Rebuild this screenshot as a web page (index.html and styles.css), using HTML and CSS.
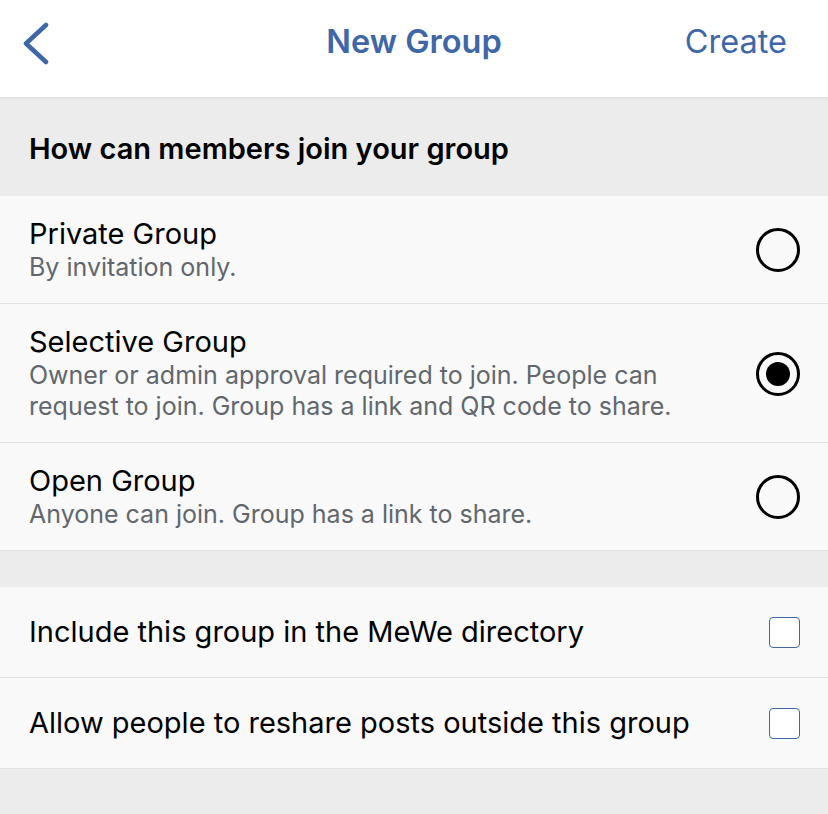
FILE: index.html
```html
<!DOCTYPE html>
<html lang="en">
<head>
    <meta charset="UTF-8">
    <meta name="viewport" content="width=device-width, initial-scale=1.0">
    <title>New Group</title>
    <link rel="stylesheet" href="styles.css">
</head>
<body>
    <header class="topbar">
        <a class="back" href="#">
            <svg width="40" height="44" viewBox="0 0 40 44"><path d="M31 4 L11 22.5 L31 41" fill="none" stroke="#3f67a8" stroke-width="4.5" stroke-linecap="round" stroke-linejoin="round"/></svg>
        </a>
        <h1>New Group</h1>
        <a class="create" href="#">Create</a>
    </header>

    <div class="section-head">How can members join your group</div>

    <ul class="list">
        <li class="row">
            <div class="text">
                <div class="title">Private Group</div>
                <div class="sub">By invitation only.</div>
            </div>
            <span class="radio"></span>
        </li>
        <li class="row">
            <div class="text">
                <div class="title">Selective Group</div>
                <div class="sub">Owner or admin approval required to join. People can request to join. Group has a link and QR code to share.</div>
            </div>
            <span class="radio checked"></span>
        </li>
        <li class="row">
            <div class="text">
                <div class="title">Open Group</div>
                <div class="sub">Anyone can join. Group has a link to share.</div>
            </div>
            <span class="radio"></span>
        </li>
    </ul>

    <div class="gap"></div>

    <ul class="list">
        <li class="row check-row">
            <div class="title">Include this group in the MeWe directory</div>
            <span class="checkbox"></span>
        </li>
        <li class="row check-row">
            <div class="title">Allow people to reshare posts outside this group</div>
            <span class="checkbox"></span>
        </li>
    </ul>
</body>
</html>
```

FILE: styles.css
```css
body { margin: 0; padding: 0; background: #ececec; font-family: Inter, "Noto Sans", Arial, sans-serif; color: #000; }
.topbar { height: 97px; background: #fff; display: grid; grid-template-columns: 1fr auto 1fr; align-items: center; box-shadow: 0 1px 3px rgba(0, 0, 0, 0.08); position: relative; }
.topbar h1 { margin: 0; font-size: 32.5px; font-weight: 600; color: #3f67a8; padding-bottom: 14px; }
.back { display: flex; padding: 0 0 12px 15px; }
.create { justify-self: end; font-size: 32.5px; color: #3f67a8; text-decoration: none; padding: 0 41px 14px 0; }
.section-head { height: 99px; box-sizing: border-box; display: flex; align-items: center; padding: 3px 0 0 29px; font-size: 29px; font-weight: 600; }
.list { list-style: none; margin: 0; padding: 0; background: #f9f9f9; }
.row { display: flex; align-items: center; justify-content: space-between; padding: 21px 28px 20px 29px; border-bottom: 1px solid #e2e2e2; }
.text { max-width: 680px; }
.title { font-size: 29px; line-height: 34px; }
.sub { font-size: 25px; line-height: 31px; color: #61676d; margin-top: 1px; }
.radio { width: 44px; height: 44px; box-sizing: border-box; border: 3px solid #000; border-radius: 50%; flex-shrink: 0; display: flex; align-items: center; justify-content: center; }
.radio.checked::after { content: ""; width: 24px; height: 24px; border-radius: 50%; background: #000; }
.gap { height: 36px; }
.check-row { height: 91px; box-sizing: border-box; padding: 0 28px 0 29px; }
.checkbox { width: 31px; height: 31px; box-sizing: border-box; border: 1.5px solid #3f67a8; border-radius: 4px; background: #fff; flex-shrink: 0; }
```
